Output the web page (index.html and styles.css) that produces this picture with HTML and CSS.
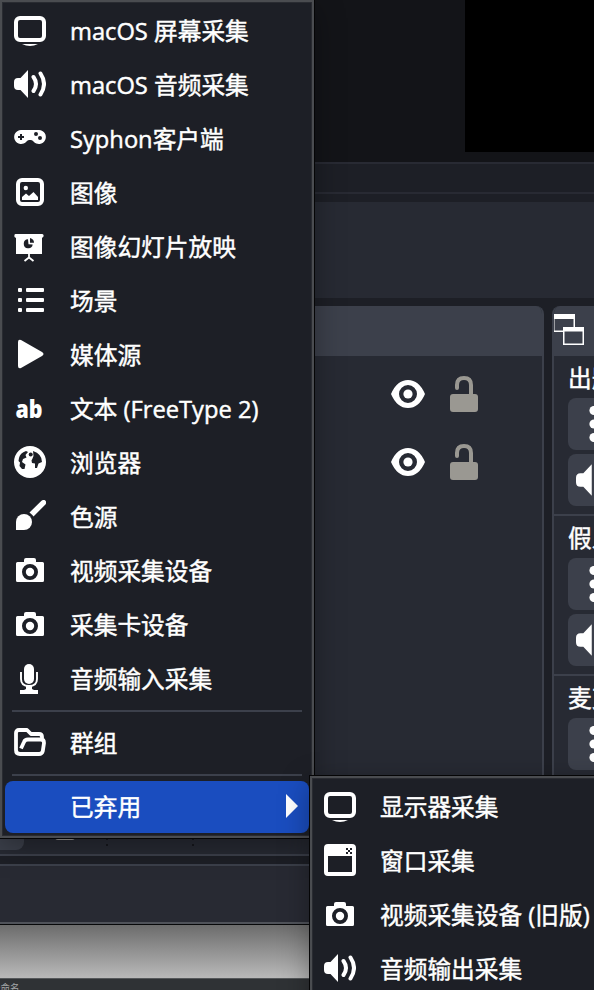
FILE: index.html
```html
<!DOCTYPE html>
<html lang="zh-CN">
<head>
<meta charset="utf-8">
<title>OBS</title>
<link rel="stylesheet" href="styles.css">
</head>
<body>
<svg class="defs" aria-hidden="true">
  <symbol id="i-monitor" viewBox="0 0 32 32"><rect x="2" y="4" width="28" height="22" rx="4" fill="none" stroke="currentColor" stroke-width="4"/><path d="M8 30H24Q20 32 16 32T8 30Z"/></symbol>
  <symbol id="i-audio" viewBox="0 0 32 32"><path d="M14 2V30L6.500 22H4Q0 22 0 18V14Q0 10 4 10H6.500Z"/><path d="M19.500 9Q24.500 16 19.500 23M26.500 5.500Q33.500 16 26.500 26.500" fill="none" stroke="currentColor" stroke-width="4" stroke-linecap="round"/></symbol>
  <symbol id="i-gamepad" viewBox="0 0 32 32"><path fill-rule="evenodd" d="M7 8H25A7 7 0 1 1 19.500 19.500Q18.500 18 17 18H15Q13.500 18 12.500 19.500A7 7 0 1 1 7 8ZM6 12V14H4V16H6V18H8V16H10V14H8V12ZM22 10A2 2 0 1 0 22 14A2 2 0 1 0 22 10ZM26 14A2 2 0 1 0 26 18A2 2 0 1 0 26 14Z"/></symbol>
  <symbol id="i-image" viewBox="0 0 32 32"><rect x="4" y="4" width="24" height="24" rx="4" fill="none" stroke="currentColor" stroke-width="4"/><circle cx="11.800" cy="12" r="2.200"/><path d="M8 24V21L12 17.500L15 20L19.500 16L24 21V24Z"/></symbol>
  <symbol id="i-slides" viewBox="0 0 32 32"><path d="M1.500 4H28Q30 4 29.500 6.500L28 8V24H2V8L.500 7Q0 4 1.500 4Z"/><path d="M14 9.300A4.500 4.500 0 1 0 18.700 14.500L14.500 14.300Z" fill="#1d1f26"/><path d="M16 8Q20 9 20 12.800H16Z" fill="#1d1f26"/><path d="M15 24V27.500M10.500 31L15 27.500L19.500 31" fill="none" stroke="currentColor" stroke-width="1.800"/></symbol>
  <symbol id="i-list" viewBox="0 0 32 32"><rect x="4" y="4" width="4" height="4" rx="1"/><rect x="4" y="14" width="4" height="4" rx="1"/><rect x="4" y="24" width="4" height="4" rx="1"/><rect x="12" y="4" width="18" height="4" rx="1"/><rect x="12" y="14" width="18" height="4" rx="1"/><rect x="12" y="24" width="18" height="4" rx="1"/></symbol>
  <symbol id="i-play" viewBox="0 0 32 32"><path d="M4 4Q4 1 7 2L28 14Q31 16 28 18L7 30Q4 31 4 28Z"/></symbol>
  <symbol id="i-globe" viewBox="0 0 32 32"><circle cx="16" cy="16" r="16"/><path fill="#1d1f26" d="M12 5Q6 7 5 12L4.500 15L6 16.500L5.500 20L8 23H10.500L11.500 18.500L8 16L9 13L12.500 11.500L11.500 9L14 6ZM19 5L19.500 10L18.500 12.500L17.500 14.500L18 17L21 17.500V22H23L24.500 17.500L28 16Q28 8 19 5Z"/><circle cx="16.700" cy="8.500" r="2" fill="#1d1f26"/></symbol>
  <symbol id="i-brush" viewBox="0 0 32 32"><path d="M2 30V22A8 8 0 1 1 10 30Z"/><path d="M15.500 12.500L27.500.800Q30-1 31.500 .800Q33 2.500 31.200 4.700L19.500 16.500Q18 14.500 15.500 12.500Z"/></symbol>
  <symbol id="i-camera" viewBox="0 0 32 32"><path fill-rule="evenodd" d="M3.500 8H10V6Q10 4 12 4H20Q22 4 22 6V8H28.500Q30 8 30 9.500V26.500Q30 28 28.500 28H3.500Q2 28 2 26.500V9.500Q2 8 3.500 8ZM16 10A8 8 0 1 0 16 26A8 8 0 1 0 16 10Z"/><circle cx="16" cy="18" r="4.200"/></symbol>
  <symbol id="i-mic" viewBox="0 0 32 32"><rect x="10" y="2" width="10" height="20" rx="5"/><path d="M7 10V17Q7 24 15 24T23 17V10" fill="none" stroke="currentColor" stroke-width="1.900"/><path d="M12 24H18V27L20 28H24V32H6V28H10L12 27Z"/></symbol>
  <symbol id="i-folder" viewBox="0 0 32 32"><path d="M28 13V11Q28 8 25 8H17L13 4H5Q2 4 2 7V24Q2 28 6 28H25Q28 28 28.800 25L30 17Q30 13.500 27 13.500H14Q11 13.500 10 16L7 22.500" fill="none" stroke="currentColor" stroke-width="3.800" stroke-linejoin="round"/></symbol>
  <symbol id="i-window" viewBox="0 0 32 32"><path fill-rule="evenodd" d="M4 0H28Q32 0 32 4V28Q32 32 28 32H4Q0 32 0 28V4Q0 0 4 0ZM4 12V28H28V12Z"/><path d="M22 4H24V6H26V4H28V6H26V8H28V10H26V8H24V10H22V8H24V6H22Z" fill="#1d1f26"/></symbol>
  <symbol id="i-eye" viewBox="0 0 34 28"><path fill-rule="evenodd" d="M0 14Q6 0 17 0T34 14Q28 28 17 28T0 14ZM17 5A9 9 0 1 0 17 23A9 9 0 1 0 17 5Z"/><circle cx="17" cy="14" r="4.600"/></symbol>
  <symbol id="i-lock" viewBox="0 0 28 36"><rect y="18" width="28" height="18" rx="3"/><path d="M7 12V9Q7 2 14 2T21 9V19" fill="none" stroke="currentColor" stroke-width="4" stroke-linecap="round"/></symbol>
  <symbol id="i-float" viewBox="0 0 32 32"><path fill-rule="evenodd" d="M0 0H22V13H31V31H10V18H0ZM1.500 5V16.500H10V13H20.500V5ZM11.500 17.500V29.500H29.500V17.500Z"/></symbol>
  <symbol id="i-dots" viewBox="0 0 10 36"><circle cx="5" cy="4.500" r="4.600"/><circle cx="5" cy="18" r="4.600"/><circle cx="5" cy="31.500" r="4.600"/></symbol>
</svg>

<div class="window">
  <div class="preview"><div class="canvas"></div></div>
  <div class="strip"></div>
  <div class="context"></div>
  <div class="docks">
    <section class="dock sources">
      <header class="dock-head"></header>
      <div class="source"><svg class="eye"><use href="#i-eye"/></svg><svg class="lock"><use href="#i-lock"/></svg></div>
      <div class="source"><svg class="eye"><use href="#i-eye"/></svg><svg class="lock"><use href="#i-lock"/></svg></div>
      <div class="toolbar"><span class="tool"></span><span class="knob"></span><span class="grip g1"></span><span class="grip g2"></span></div>
    </section>
    <section class="dock mixer">
      <header class="dock-head"><svg class="float"><use href="#i-float"/></svg></header>
      <div class="channel"><p>出题</p><div class="btn"><svg class="dots"><use href="#i-dots"/></svg></div><div class="btn"><svg class="speaker"><use href="#i-audio"/></svg></div></div>
      <div class="channel"><p>假人</p><div class="btn"><svg class="dots"><use href="#i-dots"/></svg></div><div class="btn"><svg class="speaker"><use href="#i-audio"/></svg></div></div>
      <div class="channel"><p>麦克</p><div class="btn"><svg class="dots"><use href="#i-dots"/></svg></div></div>
    </section>
  </div>
  <div class="status"></div>
</div>
<div class="desktop"></div>
<div class="taskbar">未命名</div>

<nav class="menu main">
  <div class="item"><svg class="icon"><use href="#i-monitor"/></svg><span>macOS 屏幕采集</span></div>
  <div class="item"><svg class="icon"><use href="#i-audio"/></svg><span>macOS 音频采集</span></div>
  <div class="item"><svg class="icon"><use href="#i-gamepad"/></svg><span>Syphon客户端</span></div>
  <div class="item"><svg class="icon"><use href="#i-image"/></svg><span>图像</span></div>
  <div class="item"><svg class="icon"><use href="#i-slides"/></svg><span>图像幻灯片放映</span></div>
  <div class="item"><svg class="icon"><use href="#i-list"/></svg><span>场景</span></div>
  <div class="item"><svg class="icon"><use href="#i-play"/></svg><span>媒体源</span></div>
  <div class="item"><svg class="icon" viewBox="0 0 32 32"><text class="ab" x="1.500" y="26" textLength="27" lengthAdjust="spacingAndGlyphs">ab</text></svg><span>文本 (FreeType 2)</span></div>
  <div class="item"><svg class="icon"><use href="#i-globe"/></svg><span>浏览器</span></div>
  <div class="item"><svg class="icon"><use href="#i-brush"/></svg><span>色源</span></div>
  <div class="item"><svg class="icon"><use href="#i-camera"/></svg><span>视频采集设备</span></div>
  <div class="item"><svg class="icon"><use href="#i-camera"/></svg><span>采集卡设备</span></div>
  <div class="item"><svg class="icon"><use href="#i-mic"/></svg><span>音频输入采集</span></div>
  <hr>
  <div class="item"><svg class="icon"><use href="#i-folder"/></svg><span>群组</span></div>
  <hr>
  <div class="item active"><i class="icon"></i><span>已弃用</span><svg class="arrow" viewBox="0 0 12 24"><path d="M0 0L12 12L0 24Z"/></svg></div>
</nav>

<nav class="menu sub">
  <div class="item"><svg class="icon"><use href="#i-monitor"/></svg><span>显示器采集</span></div>
  <div class="item"><svg class="icon"><use href="#i-window"/></svg><span>窗口采集</span></div>
  <div class="item"><svg class="icon"><use href="#i-camera"/></svg><span>视频采集设备 (旧版)</span></div>
  <div class="item"><svg class="icon"><use href="#i-audio"/></svg><span>音频输出采集</span></div>
</nav>
</body>
</html>
```
FILE: styles.css
```css
* { box-sizing: border-box; }
html, body { margin: 0; height: 990px; overflow: hidden; }
body {
  position: relative;
  width: 594px;
  background: #1d1f26;
  color: #fff;
  font: 23.7px/52px "Open Sans", "Noto Sans CJK SC", sans-serif;
}
svg { display: block; fill: currentColor; flex: none; }
.defs { position: absolute; width: 0; height: 0; }

.window { height: 924px; border-bottom: 2px solid #50535a; display: flex; flex-direction: column; overflow: hidden; }
.preview { height: 162px; background: #131418; display: flex; justify-content: flex-end; }
.canvas { width: 129px; height: 152px; background: #000; }
.strip { height: 32px; border: solid #282a33; border-width: 2px 0; }
.context { height: 96px; margin: 8px 0; background: #272a33; }
.docks { display: flex; gap: 8px; height: 550px; }
.dock {
  border: 2px solid #3c404b;
  border-top: 0;
  border-radius: 8px 8px 0 0;
  background: #272a33;
  overflow: hidden;
}
.dock-head { height: 50px; margin: 0 -2px; background: #3c404b; }
.sources { width: 544px; flex: none; border-left: 0; display: flex; flex-direction: column; }
.source { height: 68px; padding: 4px 64px 0 0; display: flex; justify-content: flex-end; align-items: center; gap: 25px; }
.source:first-of-type { margin-top: 2px; }
.eye { width: 34px; height: 28px; }
.lock { width: 28px; height: 36px; color: #9a9892; }
.toolbar { margin-top: auto; height: 52px; margin-bottom: 4px; display: flex; align-items: flex-end; }
.tool { width: 24px; height: 52px; background: #3c404b; border-radius: 0 0 8px 0; }
.knob { width: 20px; height: 10px; margin: 0 31px 10px; background: #9a9892; border-radius: 3px; }
.grip { width: 2px; height: 2px; margin-bottom: 4px; background: #15171c; box-shadow: 0 -6px #15171c; }
.g2 { margin-left: 84px; }

.mixer { flex: none; width: 70px; }
.float { width: 32px; height: 32px; transform: translate(1px, 8px); }
.channel { height: 160px; padding-left: 14px; border-bottom: 2px solid #3c404b; }
.channel p { margin: 0; height: 42px; line-height: 44px; white-space: nowrap; -webkit-text-stroke: .45px #fff; }
.btn { width: 52px; height: 52px; margin-bottom: 4px; border-radius: 8px; background: #3c404b; display: flex; align-items: center; }
.dots { width: 10px; height: 36px; margin-left: 21px; }
.speaker { width: 36px; height: 36px; margin-left: 8px; }

.status { height: 58px; margin-top: 8px; border-top: 2px solid #3c404b; background: #282a33; }
.desktop { height: 54px; border-top: 1px solid #08090a; background: linear-gradient(#6c6c6c, #b9b9b9); }
.taskbar { height: 12px; overflow: hidden; border-top: 1px solid #55585a; background: #2f3235; color: #a5a7a8; font-size: 9.500px; line-height: 18px; text-indent: -9px; }

.menu {
  position: absolute;
  padding: 2px 3px;
  background: #1d1f26;
  border: 2px solid #4a4c50;
  box-shadow: inset 0 0 0 1px #292b31, 0 0 0 1px #050506, 0 8px 28px rgba(0, 0, 0, .35);
}
.main { left: 0; top: 0; width: 314px; height: 838px; }
.sub { left: 310px; top: 776px; width: 320px; height: 260px; }
.item { height: 52px; margin: 1px 0 2px; padding-left: 9px; display: flex; align-items: center; border-radius: 8px; white-space: nowrap; }
.item + .item { margin-top: 0; }
.item span { -webkit-text-stroke: .45px #fff; }
.icon { width: 32px; height: 32px; margin: 0 24px 2px 0; }
.ab { font: 800 24px "Open Sans", sans-serif; }
.active { background: #1a4dbf; width: 304px; margin-bottom: 0; }
.arrow { width: 12px; height: 24px; margin: 0 11px 2px auto; }
hr { height: 2px; margin: 5px 7px; border: 0; background: #3c404b; }
```
